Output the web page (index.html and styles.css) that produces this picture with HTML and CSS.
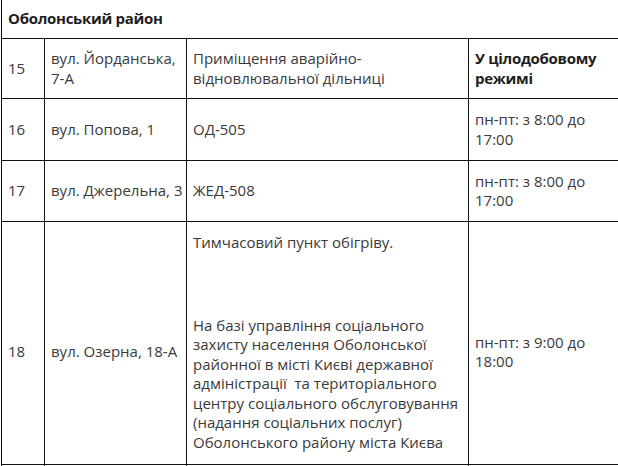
FILE: index.html
```html
<!DOCTYPE html>
<html lang="uk">
<head>
<meta charset="utf-8">
<link rel="stylesheet" href="styles.css">
</head>
<body>
<table class="list">
  <colgroup>
    <col class="c-num">
    <col class="c-addr">
    <col class="c-place">
    <col class="c-time">
  </colgroup>
  <tr class="head"><td colspan="4"><b>Оболонський район</b></td></tr>
  <tr class="r15">
    <td>15</td>
    <td>вул. Йорданська, 7-А</td>
    <td>Приміщення аварійно-відновлювальної дільниці</td>
    <td><b>У цілодобовому режимі</b></td>
  </tr>
  <tr class="r16">
    <td>16</td>
    <td>вул. Попова, 1</td>
    <td>ОД-505</td>
    <td>пн-пт: з 8:00 до 17:00</td>
  </tr>
  <tr class="r17">
    <td>17</td>
    <td>вул. Джерельна, 3</td>
    <td>ЖЕД-508</td>
    <td>пн-пт: з 8:00 до 17:00</td>
  </tr>
  <tr class="r18">
    <td class="shift">18</td>
    <td class="shift">вул. Озерна, 18-А</td>
    <td class="desc">
      <p class="first">Тимчасовий пункт обігріву.</p>
      <p>На базі управління соціального захисту населення Оболонської районної в місті Києві державної адміністрації&nbsp; та територіального центру соціального обслуговування (надання соціальних послуг) Оболонського району міста Києва</p>
    </td>
    <td class="shift">пн-пт: з 9:00 до 18:00</td>
  </tr>
  <tr class="tail"><td></td><td></td><td></td><td></td></tr>
</table>
</body>
</html>
```

FILE: styles.css
```css
html, body {
  margin: 0;
  padding: 0;
  background: #fff;
  overflow: hidden;
}
body {
  font-family: "Open Sans", "DejaVu Sans", sans-serif;
  font-size: 15px;
  line-height: 19.5px;
  color: #3a3a3a;
}
.list {
  border-collapse: collapse;
  margin: -1px 0 0 1px;
  table-layout: fixed;
  width: 618px;
}
.c-num { width: 43px; }
.c-addr { width: 142px; }
.c-place { width: 282px; }
.c-time { width: 151px; }
.list td {
  border: 1px solid #111;
  padding: 0 3px 0 6px;
  vertical-align: middle;
}
.list b {
  color: #1e1e1e;
  font-weight: 700;
  letter-spacing: -0.3px;
}
.head td { height: 38px; }
.r15 td { height: 59px; }
.r16 td { height: 61px; }
.r17 td { height: 60px; }
.desc {
  padding-top: 11px !important;
  padding-bottom: 12px !important;
}
.desc p { margin: 0; }
.desc p.first { margin-bottom: 63px; }
.shift { padding-top: 18px !important; }
.tail td { height: 20px; }
```
